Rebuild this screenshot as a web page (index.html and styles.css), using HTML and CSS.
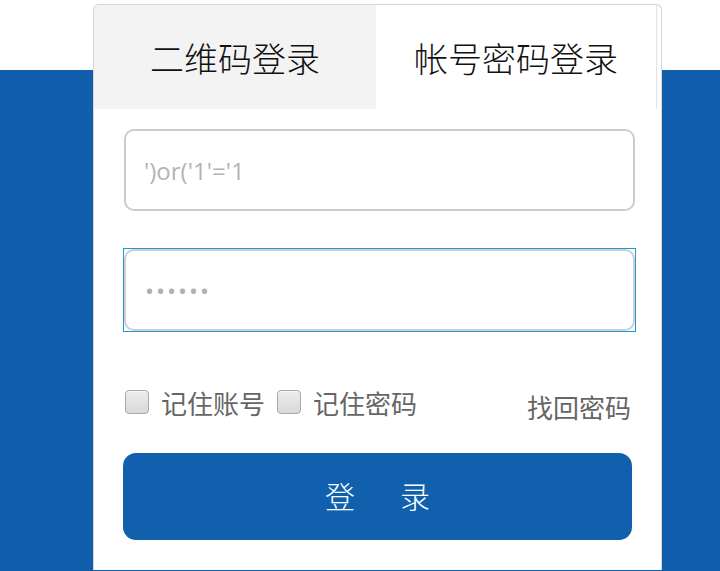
FILE: index.html
```html
<!DOCTYPE html>
<html lang="zh-CN">
<head>
<meta charset="utf-8">
<title>登录</title>
<link rel="stylesheet" href="styles.css">
</head>
<body>
<div class="page">
  <div class="card">
    <div class="tabs">
      <div class="tab">二维码登录</div>
      <div class="tab active">帐号密码登录</div>
    </div>
    <form class="form">
      <input class="field" type="text" value="')or('1'='1">
      <div class="focus-ring"><input class="field" type="password" value="123456"></div>
      <div class="options">
        <label class="check"><span class="box"></span>记住账号</label>
        <label class="check"><span class="box"></span>记住密码</label>
        <a class="forgot">找回密码</a>
      </div>
      <button class="submit" type="button"><span>登</span><span>录</span></button>
    </form>
  </div>
</div>
</body>
</html>
```
FILE: styles.css
```css
* { box-sizing: border-box; }
html, body { margin: 0; padding: 0; }
body {
  font-family: "Noto Sans CJK SC", "Noto Sans", sans-serif;
  background: #fff;
  overflow: hidden;
}
.page {
  height: 571px;
  padding-top: 4px;
  background: linear-gradient(to bottom, #ffffff 0, #ffffff 70px, #0f5fac 70px);
}
.card {
  margin-left: 93px;
  width: 569px;
  height: 566px;
  background: #fff;
  border: 1px solid #d8d8d8;
  border-bottom: none;
  border-radius: 6px 6px 0 0;
  box-shadow: 0 0 1px rgba(0,0,0,0.12);
}
.tabs {
  display: flex;
  width: 563px;
  height: 104px;
}
.tab {
  flex: 0 0 282px;
  display: flex;
  align-items: center;
  justify-content: center;
  font-size: 34px;
  font-weight: 300;
  color: #111;
  background: #f3f3f3;
  border-top-left-radius: 5px;
}
.tab.active {
  flex-basis: 281px;
  background: #fff;
  border-right: 1px solid #e3e3e3;
  border-top-left-radius: 0;
}
.form {
  display: flex;
  flex-direction: column;
  padding: 20px 26px 0 30px;
}
.field {
  display: block;
  width: 511px;
  height: 82px;
  border: 2px solid #cccccc;
  border-radius: 10px;
  padding: 0 18px;
  font-family: "Open Sans", sans-serif;
  font-size: 24px;
  color: #b4b4b4;
  background: #fff;
  outline: none;
}
.focus-ring {
  margin: 37px 0 0 -1px;
  width: 513px;
  padding: 1px;
  background: #fff;
  box-shadow: inset 0 0 0 1px #1a9ad6;
}
.focus-ring .field {
  border-color: #cfcfcf;
  padding-left: 19px;
  letter-spacing: 2px;
  color: #b0b0b0;
}
.options {
  display: flex;
  align-items: center;
  height: 24px;
  margin-top: 58px;
  font-size: 26px;
  color: #666;
}
.check {
  display: flex;
  align-items: center;
  margin-right: 11px;
  white-space: nowrap;
}
.box {
  width: 24px;
  height: 24px;
  margin: 0 12px 0 1px;
  border: 1px solid #a8a8a8;
  border-radius: 4px;
  background: linear-gradient(to bottom, #ececec, #d9d9d9);
  box-shadow: inset 0 1px 0 #f8f8f8;
}
.forgot {
  margin-left: auto;
  margin-right: 4px;
  padding-top: 9px;
  color: #666;
}
.submit {
  display: flex;
  justify-content: center;
  align-items: center;
  gap: 45px;
  margin: 39px 0 0 -1px;
  width: 509px;
  height: 87px;
  border: none;
  border-radius: 13px;
  background: #1060ad;
  color: #fff;
  font-family: "Noto Sans CJK SC", sans-serif;
  font-size: 30px;
  font-weight: 300;
  padding: 0 0 4px 0;
}
```
